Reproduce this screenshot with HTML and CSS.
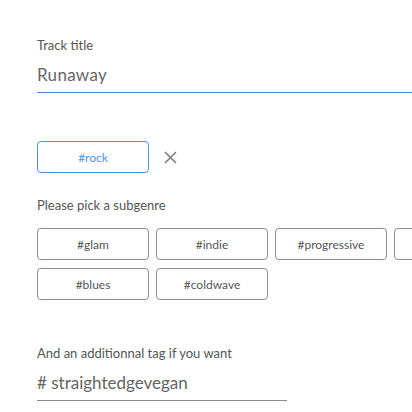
FILE: index.html
```html
<!DOCTYPE html>
<html>
<head>
<meta charset="utf-8">
<link rel="stylesheet" href="styles.css">
</head>
<body>
<div class="page">
  <div class="field title-field">
    <div class="label">Track title</div>
    <div class="input active">Runaway</div>
  </div>

  <div class="selected-row">
    <div class="tag selected">#rock</div>
    <svg class="close" width="13" height="13" viewBox="0 0 13 13"><path d="M1 1 L12 12 M12 1 L1 12" stroke="#7a7a7a" stroke-width="1.5" fill="none"/></svg>
  </div>

  <div class="label sub-label">Please pick a subgenre</div>
  <div class="chips">
    <div class="tag">#glam</div>
    <div class="tag">#indie</div>
    <div class="tag">#progressive</div>
    <div class="tag"></div>
    <div class="tag">#blues</div>
    <div class="tag">#coldwave</div>
  </div>

  <div class="field extra-field">
    <div class="label">And an additionnal tag if you want</div>
    <div class="input">#&nbsp;straightedgevegan</div>
  </div>
</div>
</body>
</html>
```

FILE: styles.css
```css
html, body {
  margin: 0;
  padding: 0;
  background: #fff;
  overflow: hidden;
  width: 412px;
  height: 412px;
}
.page {
  padding: 36px 0 0 37px;
  font-family: "Lato", "Noto Sans", sans-serif;
  color: #555;
}
.label {
  font-size: 13px;
  line-height: 18px;
  color: #555;
}
.input {
  font-size: 17px;
  line-height: 22px;
  color: #666;
  padding: 10px 0 6px;
  border-bottom: 1px solid #8a8a8a;
}
.title-field .input {
  width: 390px;
  letter-spacing: 0.3px;
  border-bottom-color: #4a90e2;
}
.selected-row {
  display: flex;
  align-items: center;
  gap: 15px;
  margin-top: 48px;
}
.tag {
  box-sizing: border-box;
  flex: none;
  width: 112px;
  height: 32px;
  border: 1px solid #8f8f8f;
  border-radius: 4px;
  display: flex;
  align-items: center;
  justify-content: center;
  font-size: 12px;
  color: #555;
}
.tag.selected {
  border-color: #4a95e8;
  color: #4a95e8;
}
.close {
  display: block;
}
.sub-label {
  margin-top: 23px;
}
.chips {
  display: flex;
  flex-wrap: wrap;
  gap: 8px 7px;
  width: 469px;
  margin-top: 14px;
}
.extra-field {
  margin-top: 44px;
}
.extra-field .input {
  width: 250px;
}
```
